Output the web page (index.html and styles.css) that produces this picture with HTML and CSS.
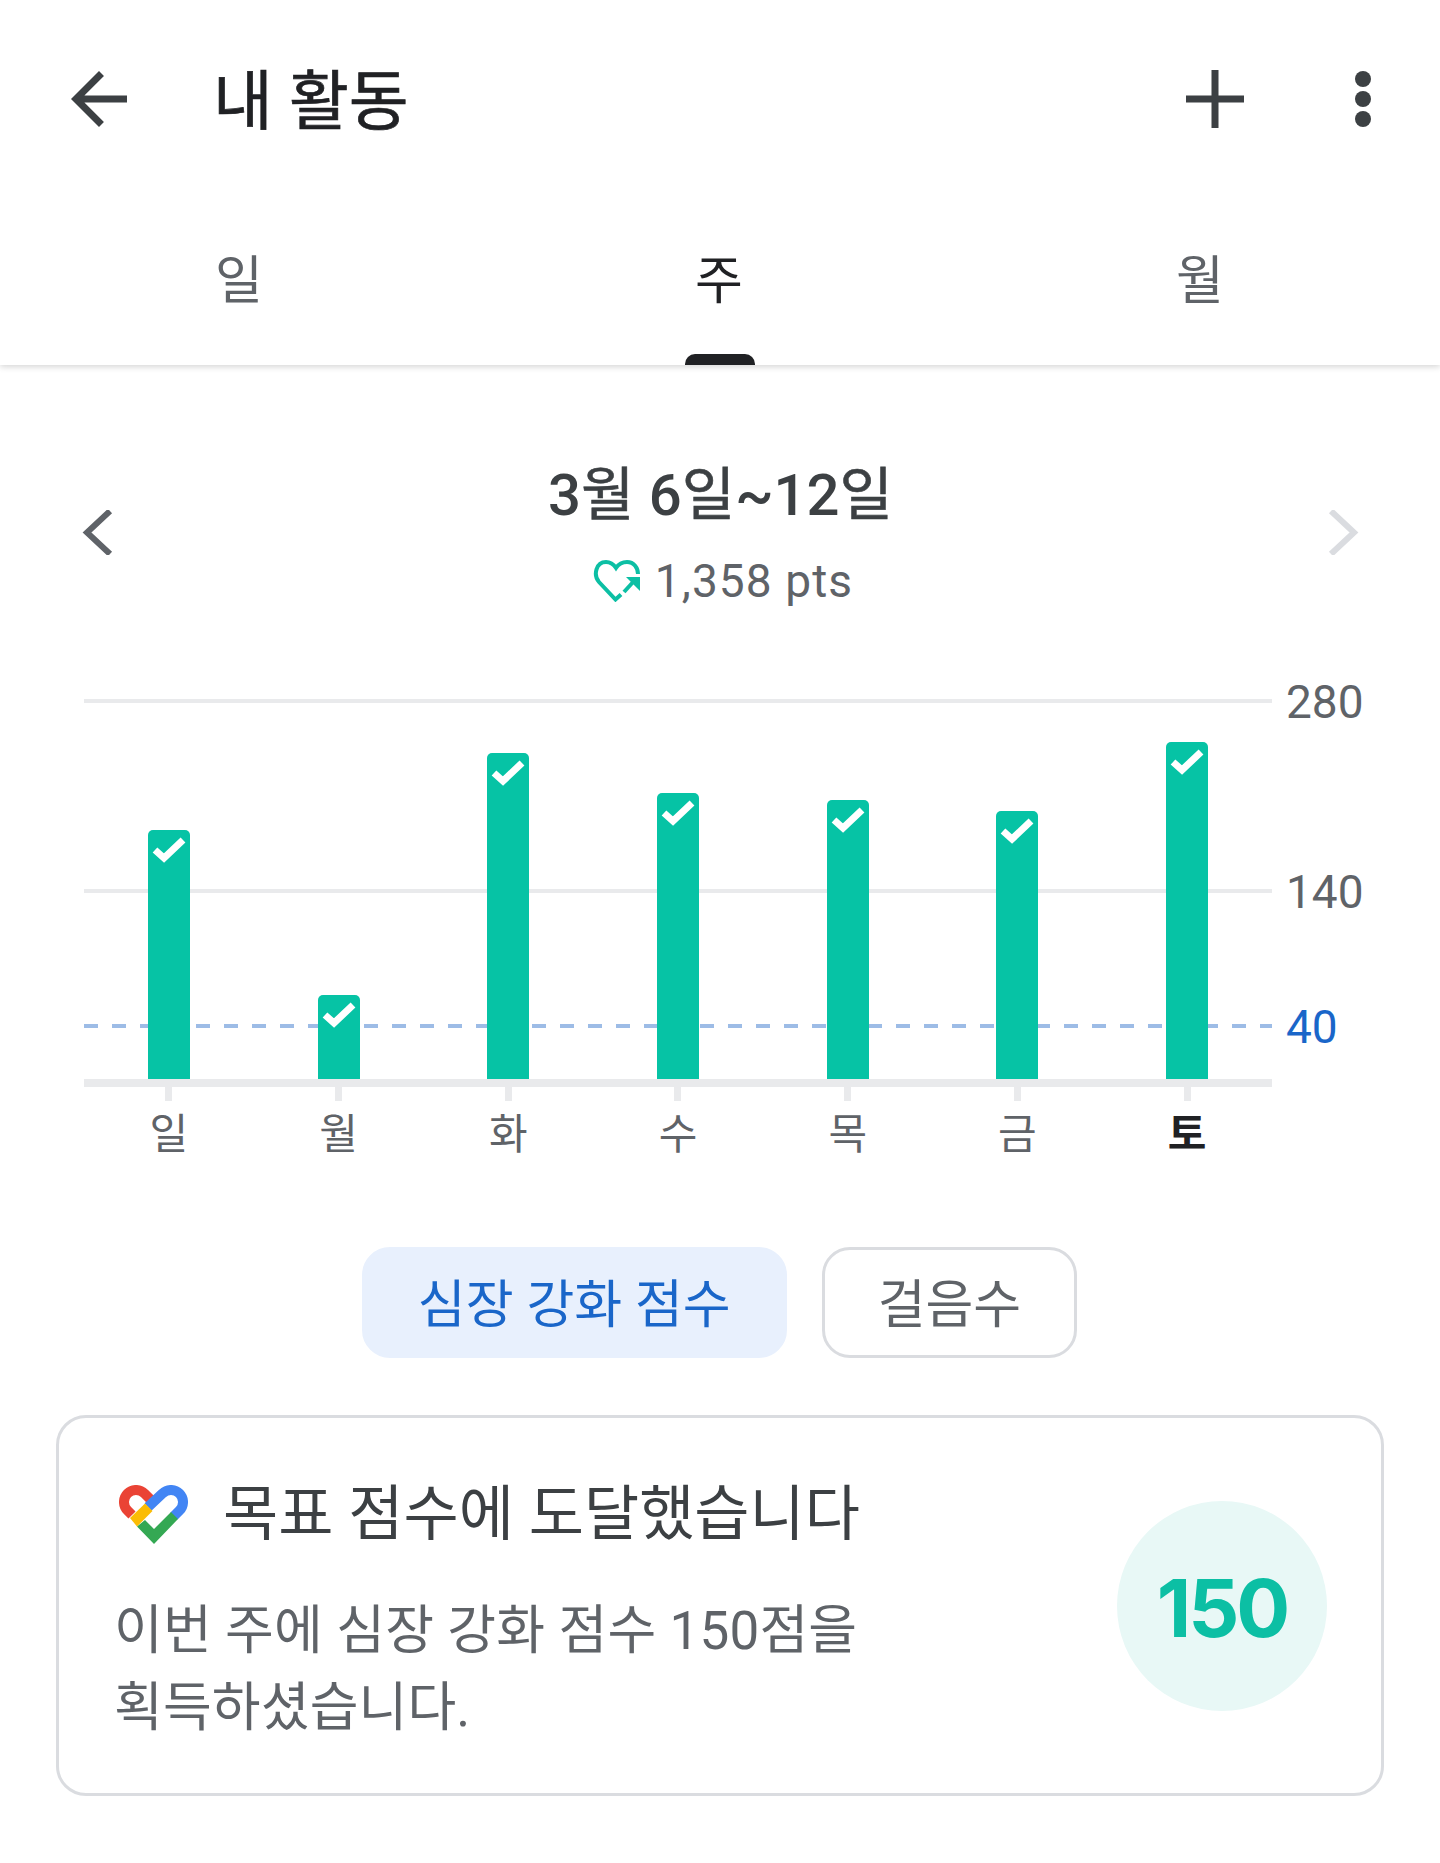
FILE: index.html
```html
<!DOCTYPE html>
<html lang="ko">
<head>
    <meta charset="UTF-8">
    <meta name="viewport" content="width=device-width, initial-scale=1.0">
    <title>내 활동</title>
    <link rel="stylesheet" href="styles.css">
</head>
<body>
    <header class="top-bar">
        <svg class="back-icon" viewBox="0 0 24 24"><path d="M20 11H7.83l5.59-5.59L12 4l-8 8 8 8 1.41-1.41L7.83 13H20v-2z"/></svg>
        <h1>내 활동</h1>
        <svg class="add-icon" viewBox="0 0 58 58"><path d="M29 0v58M0 29h58"/></svg>
        <svg class="more-icon" viewBox="0 0 16 56"><circle cx="8" cy="8" r="8"/><circle cx="8" cy="28" r="8"/><circle cx="8" cy="48" r="8"/></svg>
    </header>

    <nav class="tabs">
        <a class="tab">일</a>
        <a class="tab active">주</a>
        <a class="tab">월</a>
    </nav>

    <section class="week">
        <svg class="chevron" viewBox="0 0 31 45"><path d="M28 1L5 22.500L28 44"/></svg>
        <div class="week-info">
            <h2>3<span class="unit">월</span> 6<span class="unit">일</span>~12<span class="unit">일</span></h2>
            <p class="points">
                <svg class="heart-icon" viewBox="0 0 47 42"><path class="heart-line" d="M28 34.500L22.500 39.500L6 22C0 15 3 2 13 2C18 2 21 5 23 8C25 5 28 2 34 2C41 2 45 8 45 14"/><path class="heart-line" d="M31 32L41 21"/><path class="heart-head" d="M33 17H47V31z"/></svg>
                1,358 pts
            </p>
        </div>
        <svg class="chevron off" viewBox="0 0 31 45"><path d="M3 1L26 22.500L3 44"/></svg>
    </section>

    <section class="chart">
        <div class="plot">
            <div class="grid-line line-280"></div>
            <div class="grid-line line-140"></div>
            <div class="goal-line"></div>
            <span class="axis-label label-280">280</span>
            <span class="axis-label label-140">140</span>
            <span class="axis-label label-40">40</span>

            <div class="bar" style="height: 249px"><svg viewBox="0 0 42 42"><path d="M7 20l9 8L35 10"/></svg></div>
            <div class="bar" style="height: 84px"><svg viewBox="0 0 42 42"><path d="M7 20l9 8L35 10"/></svg></div>
            <div class="bar" style="height: 326px"><svg viewBox="0 0 42 42"><path d="M7 20l9 8L35 10"/></svg></div>
            <div class="bar" style="height: 286px"><svg viewBox="0 0 42 42"><path d="M7 20l9 8L35 10"/></svg></div>
            <div class="bar" style="height: 279px"><svg viewBox="0 0 42 42"><path d="M7 20l9 8L35 10"/></svg></div>
            <div class="bar" style="height: 268px"><svg viewBox="0 0 42 42"><path d="M7 20l9 8L35 10"/></svg></div>
            <div class="bar" style="height: 337px"><svg viewBox="0 0 42 42"><path d="M7 20l9 8L35 10"/></svg></div>
        </div>
        <div class="days">
            <span class="day">일</span>
            <span class="day">월</span>
            <span class="day">화</span>
            <span class="day">수</span>
            <span class="day">목</span>
            <span class="day">금</span>
            <span class="day today">토</span>
        </div>
    </section>

    <div class="chips">
        <button class="chip selected">심장 강화 점수</button>
        <button class="chip">걸음수</button>
    </div>

    <section class="goal-card">
        <div class="goal-text">
            <div class="goal-title">
                <svg class="fit-logo" viewBox="0 0 69 59">
                    <path class="fit-red" d="M13 30L8.500 25.500A12 12 0 1 1 25.500 8.500L33 16"/>
                    <path class="fit-blue" d="M29 22L43.500 8.500A12 12 0 0 1 60.500 25.500L55 31"/>
                    <path class="fit-green" d="M18 41.500L35 59L59 34L52 27L35 44L26 35z"/>
                    <path class="fit-yellow" d="M11 33L26 18.500L33.500 26L18 41.500z"/>
                </svg>
                <h3>목표 점수에 도달했습니다</h3>
            </div>
            <p>이번 주에 심장 강화 점수 150점을<br>획득하셨습니다.</p>
        </div>
        <div class="score">150</div>
    </section>
</body>
</html>
```

FILE: styles.css
```css
* { box-sizing: border-box; }
body { margin: 0; background: white; font-family: Roboto, "Noto Sans CJK KR", sans-serif; color: #5f6368; }
h1, h2, h3, p { margin: 0; font-weight: 400; }

.top-bar { display: flex; align-items: center; height: 198px; padding: 0 69px 0 57px; }
.top-bar h1 { flex: 1; margin: 0 0 6px 72px; font-size: 65px; -webkit-text-stroke: 0.7px #202124; color: #202124; }
.back-icon { width: 84px; height: 84px; fill: #3c4043; }
.add-icon { width: 58px; height: 58px; margin-right: 111px; fill: none; stroke: #3c4043; stroke-width: 7; }
.more-icon { width: 16px; height: 56px; fill: #3c4043; }

.tabs { position: relative; display: flex; justify-content: space-between; height: 167px; padding-right: 2px; box-shadow: 0 2px 6px rgba(0, 0, 0, 0.16); clip-path: inset(0 0 -12px 0); }
.tab { position: relative; width: 476px; padding-top: 41px; font-size: 52px; text-align: center; }
.tab:first-child { padding-left: 2px; }
.tab.active { color: #202124; }
.tab.active::after { content: ""; position: absolute; left: 204px; bottom: 0; width: 70px; height: 11px; background: #202124; border-radius: 10px 10px 0 0; }

.week { display: flex; align-items: center; justify-content: space-between; margin-top: 92px; padding: 0 81px 0 82px; }
.week-info { text-align: center; }
.week-info h2 { font-size: 58px; font-weight: 500; color: #3c4043; line-height: 76px; }
.unit { font-weight: 400; -webkit-text-stroke: 0.6px #3c4043; }
.points { display: flex; align-items: center; justify-content: center; gap: 15px; margin: 21px 0 0 5px; font-size: 46px; letter-spacing: 1.1px; }
.heart-icon { width: 47px; height: 42px; }
.heart-line { fill: none; stroke: #0cbfa4; stroke-width: 4; }
.heart-head { fill: #0cbfa4; }
.chevron { width: 31px; height: 45px; fill: none; stroke: #5f6368; stroke-width: 6; }
.chevron.off { stroke: #dadce0; }

.chart { width: 1188px; margin: 93px 0 0 84px; }
.plot { position: relative; display: grid; grid-template-columns: repeat(7, 1fr); align-items: end; height: 378px; }
.grid-line { position: absolute; left: 0; right: 0; height: 4px; background: #e9eaec; }
.line-280 { top: -2px; }
.line-140 { top: 188px; }
.goal-line { position: absolute; left: 0; right: 0; top: 323px; height: 4px; background: repeating-linear-gradient(90deg, #9dbce6 0 14px, transparent 14px 28px); }
.axis-label { position: absolute; left: 1202px; font-size: 46px; line-height: 54px; }
.label-280 { top: -26px; }
.label-140 { top: 164px; }
.label-40 { top: 299px; color: #1a66c9; }
.bar { position: relative; justify-self: center; width: 42px; background: #06c3a5; border-radius: 5px 5px 0 0; }
.bar svg { display: block; width: 42px; height: 42px; fill: none; stroke: white; stroke-width: 7; }

.days { display: grid; grid-template-columns: repeat(7, 1fr); border-top: 8px solid #e9eaec; }
.day { font-size: 42px; line-height: 60px; text-align: center; }
.day::before { content: ""; display: block; width: 7px; height: 14px; margin: 0 auto 4px; background: #e9eaec; }
.today { color: #202124; font-weight: 700; }

.chips { display: flex; justify-content: center; gap: 35px; margin-top: 82px; padding-right: 1px; }
.chip { height: 111px; padding: 0 53px 4px; background: white; border: 3px solid #dadce0; border-radius: 28px; font: inherit; font-size: 52px; color: #5f6368; }
.chip.selected { background: #e8f0fd; border-color: #e8f0fd; color: #1a66c9; }

.goal-card { display: flex; align-items: center; justify-content: space-between; height: 381px; margin: 57px 56px 0 56px; padding: 0 54px 0 55px; border: 3px solid #dadce0; border-radius: 30px; }
.goal-title { display: flex; align-items: center; gap: 35px; margin-left: 5px; }
.fit-logo { width: 69px; height: 59px; margin-top: 12px; }
.fit-red { fill: none; stroke: #ea4335; stroke-width: 10; }
.fit-blue { fill: none; stroke: #4285f4; stroke-width: 10; }
.fit-green { fill: #34a853; }
.fit-yellow { fill: #fbbc04; }
.goal-title h3 { font-size: 60px; font-weight: 400; color: #3c4043; }
.goal-text p { margin-top: 41px; font-size: 53px; letter-spacing: 0.15px; line-height: 77px; }
.score { display: flex; align-items: center; justify-content: center; width: 210px; height: 210px; padding-top: 4px; background: #e8f8f6; border-radius: 50%; font-family: Inter, sans-serif; font-size: 80px; font-weight: 700; letter-spacing: -3px; color: #0cbfa4; }
```
